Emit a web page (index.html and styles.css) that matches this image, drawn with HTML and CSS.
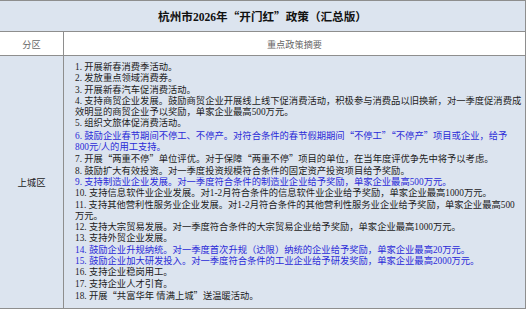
FILE: index.html
```html
<!DOCTYPE html>
<html lang="zh-CN">
<head>
<meta charset="utf-8">
<title>杭州市2026年“开门红”政策（汇总版）</title>
<link rel="stylesheet" href="styles.css">
</head>
<body>
<div class="sheet">
  <div class="title">杭州市2026年<span class="q">“</span>开门红<span class="q">”</span>政策（汇总版）</div>
  <div class="row head">
    <div class="cell side">分区</div>
    <div class="cell main">重点政策摘要</div>
  </div>
  <div class="row body">
    <div class="cell side district">上城区</div>
    <div class="cell list">
      <div class="ln">1. 开展新春消费季活动。</div>
      <div class="ln">2. 发放重点领域消费券。</div>
      <div class="ln">3. 开展新春汽车促消费活动。</div>
      <div class="ln">4. 支持商贸企业发展。鼓励商贸企业开展线上线下促消费活动，积极参与消费品以旧换新，对一季度促消费成</div>
      <div class="ln">效明显的商贸企业予以奖励，单家企业最高500万元。</div>
      <div class="ln">5. 组织文旅体促消费活动。</div>
      <div class="ln blue">6. 鼓励企业春节期间不停工、不停产。对符合条件的春节假期期间<span class="q">“</span>不停工<span class="q">”“</span>不停产<span class="q">”</span>项目或企业，给予</div>
      <div class="ln blue">800元/人的用工支持。</div>
      <div class="ln">7. 开展<span class="q">“</span>两重不停<span class="q">”</span>单位评优。对于保障<span class="q">“</span>两重不停<span class="q">”</span>项目的单位，在当年度评优争先中将予以考虑。</div>
      <div class="ln">8. 鼓励扩大有效投资。对一季度投资规模符合条件的固定资产投资项目给予奖励。</div>
      <div class="ln blue">9. 支持制造业企业发展。对一季度符合条件的制造业企业给予奖励，单家企业最高500万元。</div>
      <div class="ln">10. 支持信息软件业企业发展。对1-2月符合条件的信息软件业企业给予奖励，单家企业最高1000万元。</div>
      <div class="ln">11. 支持其他营利性服务业企业发展。对1-2月符合条件的其他营利性服务业企业给予奖励，单家企业最高500</div>
      <div class="ln">万元。</div>
      <div class="ln">12. 支持大宗贸易发展。对一季度符合条件的大宗贸易企业给予奖励，单家企业最高1000万元。</div>
      <div class="ln">13. 支持外贸企业发展。</div>
      <div class="ln blue">14. 鼓励企业升规纳统。对一季度首次升规（达限）纳统的企业给予奖励，单家企业最高20万元。</div>
      <div class="ln blue">15. 鼓励企业加大研发投入。对一季度符合条件的工业企业给予研发奖励，单家企业最高2000万元。</div>
      <div class="ln">16. 支持企业稳岗用工。</div>
      <div class="ln">17. 支持企业人才引育。</div>
      <div class="ln">18. 开展<span class="q">“</span>共富华年 情满上城<span class="q">”</span>送温暖活动。</div>
    </div>
  </div>
</div>
</body>
</html>
```

FILE: styles.css
```css
html, body {
  margin: 0;
  padding: 0;
  background: #ffffff;
}

body {
  font-family: "Liberation Serif", "Noto Sans CJK SC", serif;
  color: #1c1c1c;
}

.q {
  font-family: "Noto Sans CJK SC", sans-serif;
}

.sheet {
  width: 525px;
  border-top: 1px solid #8e8e8e;
  border-right: 1px solid #8e8e8e;
  border-bottom: 1px solid #8e8e8e;
}

.title {
  height: 30px;
  display: flex;
  align-items: center;
  justify-content: center;
  background: #dce4ef;
  border-bottom: 1px solid #8e8e8e;
  font-size: 11.6px;
  font-weight: bold;
  color: #111111;
}

.row {
  display: grid;
  grid-template-columns: 64px 1fr;
}

.head {
  height: 23px;
  background: #ffffff;
  border-bottom: 1px solid #8e8e8e;
  font-size: 9.2px;
  color: #666666;
}

.cell {
  display: flex;
  align-items: center;
  justify-content: center;
}

.side {
  border-right: 1px solid #8e8e8e;
}

.body {
  height: 252px;
  background: #dce4ef;
}

.district {
  font-size: 9.4px;
  color: #222222;
}

.list {
  display: block;
  padding: 6px 0 0 11px;
  font-size: 9.3px;
  line-height: 11.3px;
}

.ln {
  white-space: nowrap;
}

.blue {
  color: #2a2ad8;
}
```
